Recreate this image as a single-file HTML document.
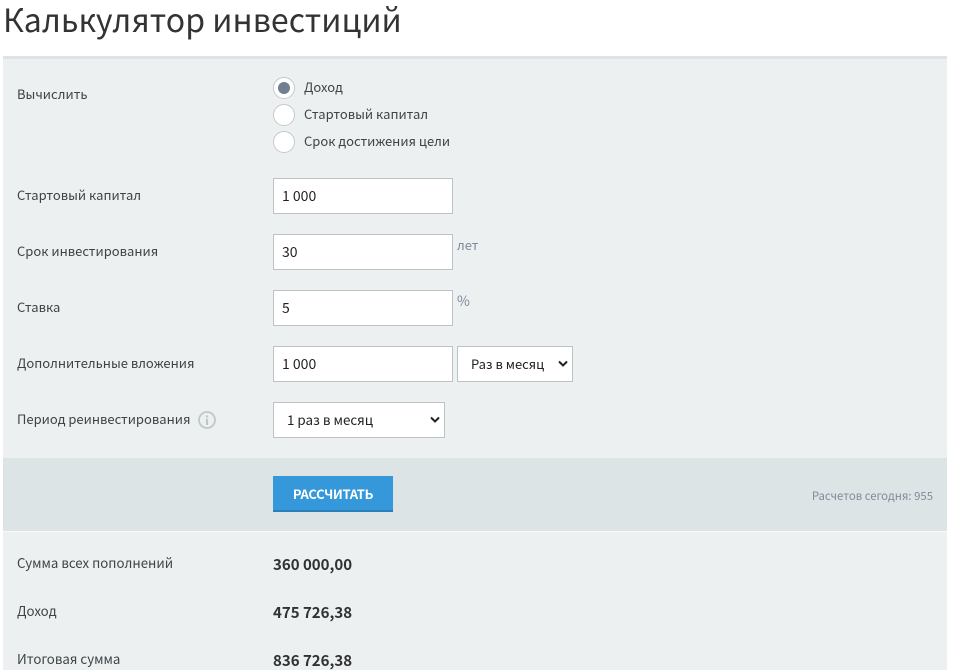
<!DOCTYPE html>
<html lang="ru"><head><meta charset="utf-8"><title>Калькулятор инвестиций</title>
<style>
html,body{margin:0;padding:0;background:#fff;width:954px;height:670px;overflow:hidden}
body{position:relative;font-family:"Noto Sans CJK JP","Liberation Sans",sans-serif;color:#3b3f42}
.a{position:absolute;white-space:nowrap}
.t{font-size:13px;line-height:20px;height:20px;color:#3e4347}
.box{position:absolute;box-sizing:border-box;background:#fff;border:1px solid #bdc3c7;height:36px;font-size:14px;line-height:34px;color:#222;white-space:nowrap}
.r{position:absolute;left:273px;width:22px;height:22px;box-sizing:border-box;border-radius:50%;background:#fff;border:1px solid #c5c9cc}
.b{font-size:15px;font-weight:700;line-height:20px;color:#2f3133;left:273px}
.s{font-size:13.25px}
</style></head><body>
<div class="a" style="left:3px;top:-6px;font-size:32px;line-height:50px;color:#333;letter-spacing:.05px">Калькулятор инвестиций</div>
<div class="a" style="left:3px;top:56px;width:944px;height:614px;background:#ecf0f1"></div>
<div class="a" style="left:3px;top:56px;width:944px;height:3px;background:#dde4e6"></div>

<div class="a t" style="left:17px;top:84px">Вычислить</div>
<div class="r" style="top:77px"></div>
<div class="a" style="left:278px;top:82px;width:12px;height:12px;border-radius:50%;background:#708090"></div>
<div class="a t" style="left:304px;top:77px">Доход</div>
<div class="r" style="top:104px"></div>
<div class="a t" style="left:304px;top:104px">Стартовый капитал</div>
<div class="r" style="top:131px"></div>
<div class="a t" style="left:304px;top:131px">Срок достижения цели</div>

<div class="a t" style="left:17px;top:185px">Стартовый капитал</div>
<div class="box" style="left:273px;top:178px;width:180px;padding-left:8px">1 000</div>
<div class="a t" style="left:17px;top:241px">Срок инвестирования</div>
<div class="box" style="left:273px;top:234px;width:180px;padding-left:8px">30</div>
<div class="a t" style="left:457px;top:235px;color:#7f8c9a">лет</div>
<div class="a t" style="left:17px;top:297px">Ставка</div>
<div class="box" style="left:273px;top:290px;width:180px;padding-left:8px">5</div>
<div class="a t" style="left:457px;top:291px;color:#7f8c9a;font-size:14px">%</div>
<div class="a t" style="left:17px;top:353px">Дополнительные вложения</div>
<div class="box" style="left:273px;top:346px;width:180px;padding-left:8px">1 000</div>
<div class="box" style="left:457px;top:346px;width:116px;padding-left:13px;font-size:13px">Раз в месяц</div>
<svg class="a" style="left:558px;top:360px" width="10" height="8" viewBox="0 0 10 8"><path d="M1 1.5 5 5.5 9 1.5" fill="none" stroke="#222" stroke-width="2"/></svg>
<div class="a t" style="left:17px;top:409px">Период реинвестирования</div>
<svg class="a" style="left:198px;top:411px" width="18" height="18" viewBox="0 0 18 18"><circle cx="9" cy="9" r="8" fill="none" stroke="#bfc8c8" stroke-width="1.8"/><rect x="7.9" y="7.8" width="2.2" height="6.2" fill="#bfc8c8"/><rect x="7.9" y="4.3" width="2.2" height="2.2" fill="#bfc8c8"/></svg>
<div class="box" style="left:273px;top:402px;width:172px;padding-left:13px;font-size:13.4px;line-height:33px">1 раз в месяц</div>
<svg class="a" style="left:430px;top:416px" width="10" height="8" viewBox="0 0 10 8"><path d="M1 1.5 5 5.5 9 1.5" fill="none" stroke="#222" stroke-width="2"/></svg>

<div class="a" style="left:3px;top:458px;width:944px;height:73px;background:#dde4e6"></div>
<div class="a" style="left:3px;top:531px;width:944px;height:1px;background:#f8fafa"></div>
<div class="a" style="left:273px;top:476px;width:120px;height:36px;box-sizing:border-box;background:#3498db;border-bottom:2px solid #2a7fb8;color:#fff;font-size:13px;font-weight:700;line-height:36px;text-align:center;letter-spacing:-.3px">РАССЧИТАТЬ</div>
<div class="a" style="right:21px;top:486px;font-size:11.35px;line-height:20px;color:#7f8c9a">Расчетов сегодня: 955</div>

<div class="a t s" style="left:17px;top:553px">Сумма всех пополнений</div>
<div class="a b" style="top:555px">360 000,00</div>
<div class="a t s" style="left:17px;top:601px">Доход</div>
<div class="a b" style="top:603px">475 726,38</div>
<div class="a t s" style="left:17px;top:649px">Итоговая сумма</div>
<div class="a b" style="top:651px">836 726,38</div>
</body></html>
